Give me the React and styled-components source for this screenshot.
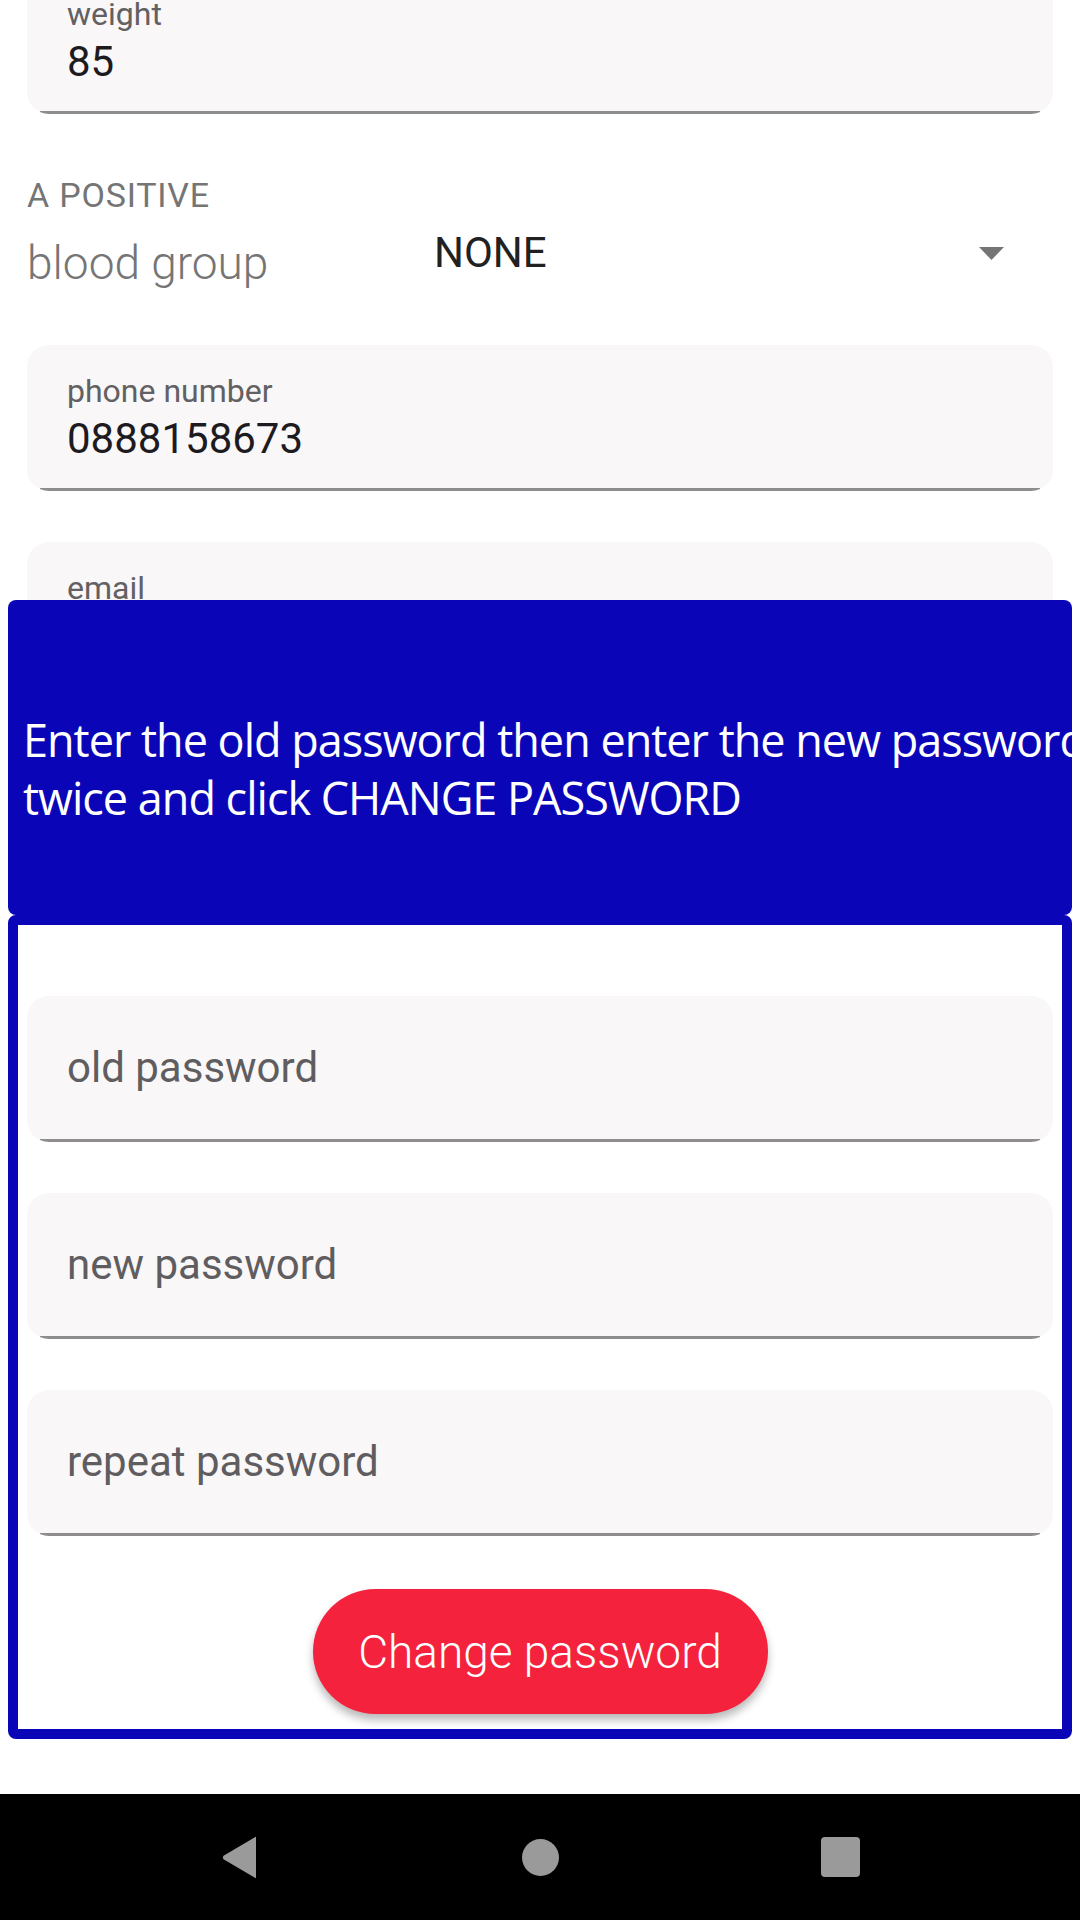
import React from 'react';
import styled, { createGlobalStyle } from 'styled-components';

const GlobalStyle = createGlobalStyle`
  html, body {
    margin: 0;
    padding: 0;
    background: #ffffff;
  }
  body {
    font-family: Roboto, "Noto Sans", sans-serif;
  }
  * {
    box-sizing: border-box;
  }
`;

export default function App() {
  return (
    <>
      <GlobalStyle />
      <Screen>
        <Content>
          <Form>
            <FilledField label="weight" value="85" first />
            <BloodHint>A POSITIVE</BloodHint>
            <BloodRow>
              <BloodLabel>blood group</BloodLabel>
              <Spinner>
                <SpinnerValue>NONE</SpinnerValue>
                <svg width="25" height="13" viewBox="0 0 25 13">
                  <polygon points="0,0 25,0 12.5,13" fill="#757575" />
                </svg>
              </Spinner>
            </BloodRow>
            <FilledField label="phone number" value="0888158673" />
            <FilledField label="email" />
          </Form>

          <Popup>
            <PopupHeader>
              <HeaderText>
                Enter the old password then enter the new password twice and click CHANGE PASSWORD
              </HeaderText>
            </PopupHeader>
            <PopupBody>
              <PasswordField placeholder="old password" />
              <PasswordField placeholder="new password" />
              <PasswordField placeholder="repeat password" />
              <ChangeButton>Change password</ChangeButton>
            </PopupBody>
          </Popup>
        </Content>

        <NavBar>
          <NavSlot>
            <svg width="38" height="43" viewBox="0 0 38 43">
              <path d="M35 2 L35 41 Q35 43 33.5 41.5 L2.5 23.2 Q1 21.5 2.5 19.8 L33.5 1.5 Q35 0 35 2 Z" fill="#9a9a9a" />
            </svg>
          </NavSlot>
          <NavSlot>
            <HomeDot />
          </NavSlot>
          <NavSlot>
            <RecentSquare />
          </NavSlot>
        </NavBar>
      </Screen>
    </>
  );
}

function FilledField({ label, value, first }) {
  return (
    <FieldCard first={first}>
      <FieldInner>
        <FieldLabel>{label}</FieldLabel>
        {value && <FieldValue>{value}</FieldValue>}
      </FieldInner>
      <Underline />
    </FieldCard>
  );
}

function PasswordField({ placeholder }) {
  return (
    <FieldCard>
      <PlaceholderInner>
        <Placeholder>{placeholder}</Placeholder>
      </PlaceholderInner>
      <Underline />
    </FieldCard>
  );
}

const Screen = styled.div`
  width: 1080px;
  height: 1920px;
  display: flex;
  flex-direction: column;
  overflow: hidden;
  background: #ffffff;
`;

const Content = styled.div`
  position: relative;
  flex: 1;
  overflow: hidden;
`;

const Form = styled.div`
  display: flex;
  flex-direction: column;
  padding: 0 27px;
`;

const FieldCard = styled.div`
  height: 146px;
  margin-top: ${({ first }) => (first ? '-32px' : '51px')};
  display: flex;
  flex-direction: column;
  background: #f9f7f8;
  border-radius: 22px;
  overflow: hidden;
`;

const FieldInner = styled.div`
  flex: 1;
  display: flex;
  flex-direction: column;
  padding: 26px 40px 0;
`;

const FieldLabel = styled.div`
  font-size: 32px;
  line-height: 40px;
  color: #626062;
`;

const FieldValue = styled.div`
  margin-top: 3px;
  font-size: 42px;
  line-height: 50px;
  color: #1d1b20;
`;

const PlaceholderInner = styled.div`
  flex: 1;
  display: flex;
  align-items: center;
  padding: 0 40px;
`;

const Placeholder = styled.div`
  font-size: 42px;
  line-height: 50px;
  color: #5f5d60;
`;

const Underline = styled.div`
  height: 3px;
  margin: 0 13px;
  background: #8e8c8e;
`;

const BloodHint = styled.div`
  margin-top: 60px;
  font-size: 34px;
  line-height: 42px;
  letter-spacing: 0.8px;
  color: #757575;
`;

const BloodRow = styled.div`
  margin-top: 12px;
  margin-bottom: 3px;
  display: flex;
  align-items: flex-start;
`;

const BloodLabel = styled.div`
  width: 380px;
  margin-top: 7px;
  font-size: 46px;
  line-height: 56px;
  font-weight: 300;
  color: #757575;
`;

const Spinner = styled.div`
  flex: 1;
  height: 50px;
  display: flex;
  align-items: center;
  justify-content: space-between;
  padding: 0 49px 0 27px;
`;

const SpinnerValue = styled.div`
  font-size: 42px;
  line-height: 50px;
  color: #212121;
`;

const Popup = styled.div`
  position: absolute;
  top: 600px;
  left: 8px;
  right: 8px;
  display: flex;
  flex-direction: column;
`;

const PopupHeader = styled.div`
  height: 315px;
  padding: 111px 0 0 15px;
  background: #0a06b8;
  border-radius: 8px;
  overflow: hidden;
`;

const HeaderText = styled.div`
  width: 1110px;
  font-family: "Open Sans", "Noto Sans", sans-serif;
  font-size: 45px;
  line-height: 58px;
  letter-spacing: -1px;
  color: #ffffff;
`;

const PopupBody = styled.div`
  display: flex;
  flex-direction: column;
  align-items: stretch;
  padding: 20px 9px 15px;
  border: 10px solid #0a06b8;
  border-radius: 8px;
  background: #ffffff;
`;

const ChangeButton = styled.button`
  align-self: center;
  width: 455px;
  height: 125px;
  margin-top: 53px;
  border: none;
  border-radius: 63px;
  background: #f4223c;
  color: #ffffff;
  font-family: Roboto, sans-serif;
  font-size: 46px;
  font-weight: 300;
  box-shadow: 0 6px 8px rgba(0, 0, 0, 0.28);
`;

const NavBar = styled.div`
  height: 126px;
  flex: 0 0 126px;
  display: grid;
  grid-template-columns: repeat(3, 300px);
  padding: 0 90px;
  align-items: center;
  background: #000000;
`;

const NavSlot = styled.div`
  display: flex;
  justify-content: center;
  align-items: center;
`;

const HomeDot = styled.div`
  width: 37px;
  height: 37px;
  border-radius: 50%;
  background: #9a9a9a;
`;

const RecentSquare = styled.div`
  width: 39px;
  height: 40px;
  border-radius: 4px;
  background: #9a9a9a;
`;
